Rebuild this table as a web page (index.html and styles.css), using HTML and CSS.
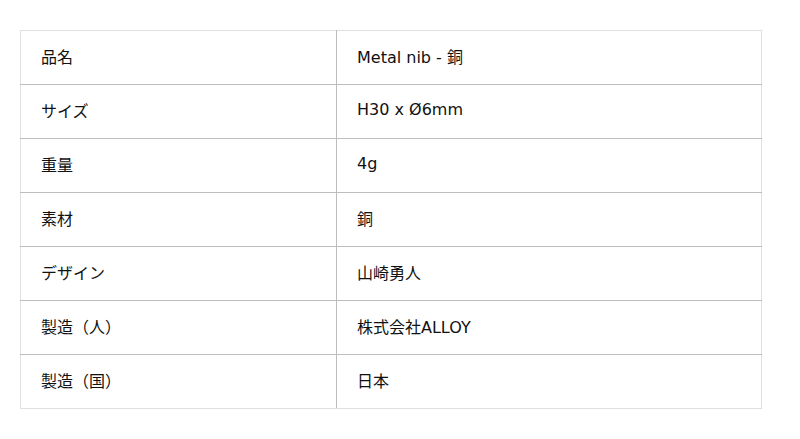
FILE: index.html
```html
<!DOCTYPE html>
<html lang="ja">
<head>
<meta charset="utf-8">
<link rel="stylesheet" href="styles.css">
</head>
<body>
<table class="spec">
  <tbody>
    <tr><th>品名</th><td>Metal nib - 銅</td></tr>
    <tr><th>サイズ</th><td>H30 x Ø6mm</td></tr>
    <tr><th>重量</th><td>4g</td></tr>
    <tr><th>素材</th><td>銅</td></tr>
    <tr><th>デザイン</th><td>山崎勇人</td></tr>
    <tr><th>製造（人）</th><td>株式会社ALLOY</td></tr>
    <tr><th>製造（国）</th><td>日本</td></tr>
  </tbody>
</table>
</body>
</html>
```
FILE: styles.css
```css
html, body {
  margin: 0;
  padding: 0;
  background: #fff;
}
body {
  padding: 30px 0 0 20px;
  font-family: "DejaVu Sans", "Noto Sans CJK JP", sans-serif;
  font-size: 16px;
  color: #111;
}
.spec {
  border-collapse: collapse;
  width: 742px;
  table-layout: fixed;
  border: 1px solid #e0e0e0;
}
.spec th, .spec td {
  height: 54px;
  padding: 0 20px 4px;
  text-align: left;
  font-weight: normal;
  vertical-align: middle;
  border-bottom: 1px solid #bdbdbd;
  box-sizing: border-box;
}
.spec tr:last-child th, .spec tr:last-child td {
  border-bottom: 1px solid #e0e0e0;
}
.spec th {
  width: 316px;
  border-right: 1px solid #bdbdbd;
}
```
